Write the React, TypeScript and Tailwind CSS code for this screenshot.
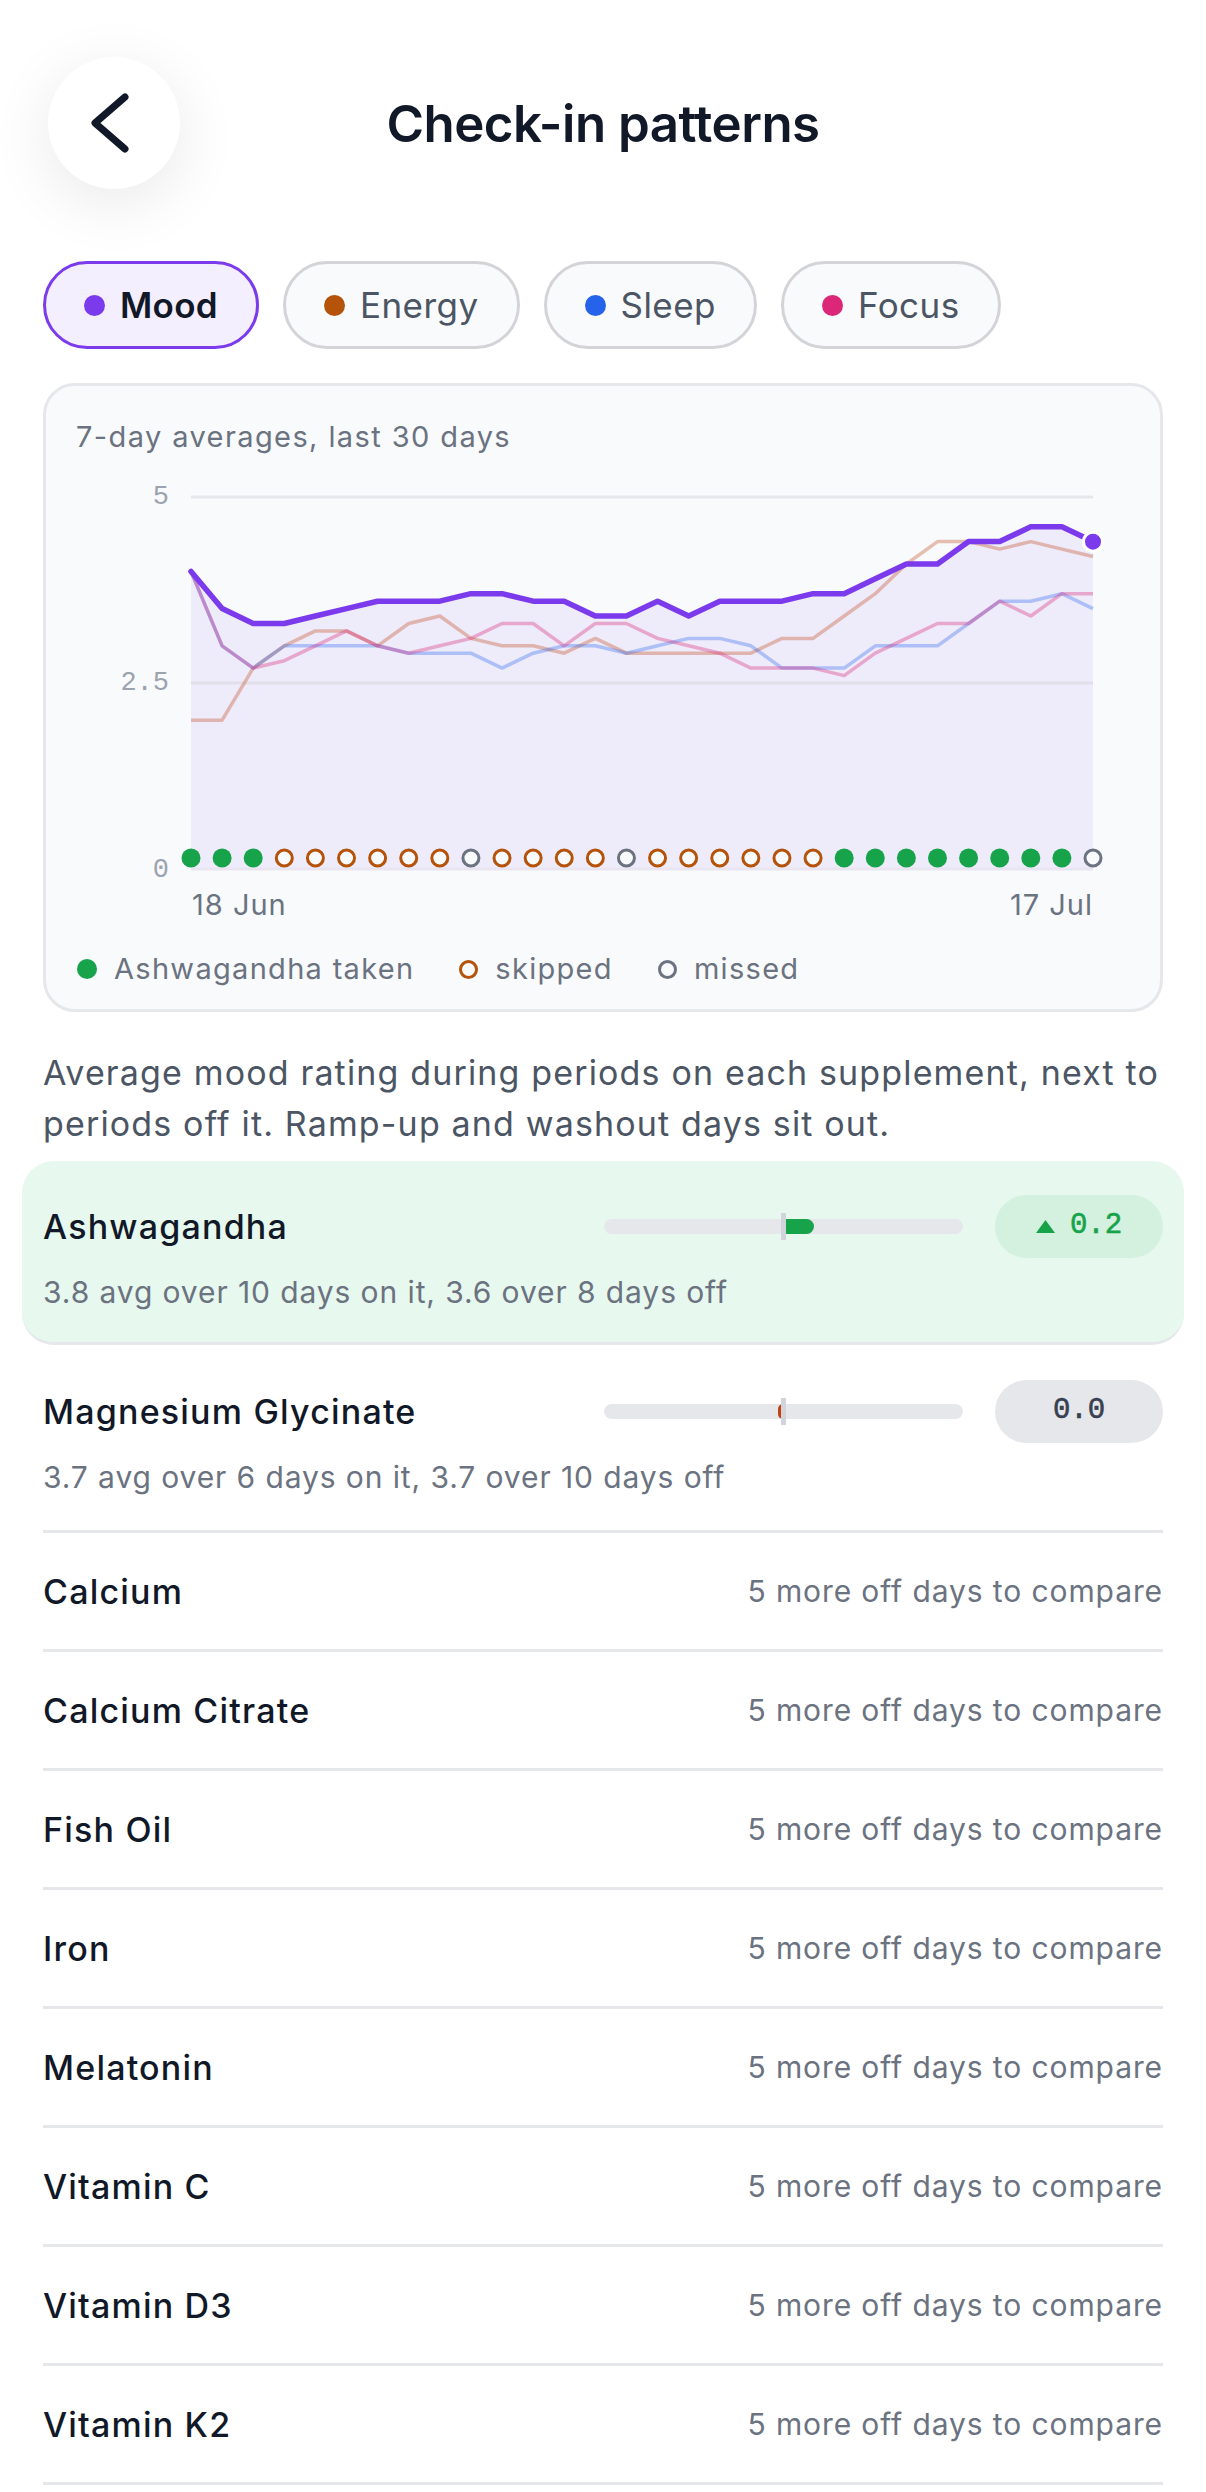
import React from "react";

const mood = [4.0, 3.5, 3.3, 3.3, 3.4, 3.5, 3.6, 3.6, 3.6, 3.7, 3.7, 3.6, 3.6, 3.4, 3.4, 3.6, 3.4, 3.6, 3.6, 3.6, 3.7, 3.7, 3.9, 4.1, 4.1, 4.4, 4.4, 4.6, 4.6, 4.4];
const energy = [2.0, 2.0, 2.7, 3.0, 3.2, 3.2, 3.0, 3.3, 3.4, 3.1, 3.0, 3.0, 2.9, 3.1, 2.9, 2.9, 2.9, 2.9, 2.9, 3.1, 3.1, 3.4, 3.7, 4.1, 4.4, 4.4, 4.3, 4.4, 4.3, 4.2];
const sleep = [4.0, 3.0, 2.7, 3.0, 3.0, 3.0, 3.0, 2.9, 2.9, 2.9, 2.7, 2.9, 3.0, 3.0, 2.9, 3.0, 3.1, 3.1, 3.0, 2.7, 2.7, 2.7, 3.0, 3.0, 3.0, 3.3, 3.6, 3.6, 3.7, 3.5];
const focus = [4.0, 3.0, 2.7, 2.8, 3.0, 3.2, 3.0, 2.9, 3.0, 3.1, 3.3, 3.3, 3.0, 3.3, 3.3, 3.1, 3.0, 2.9, 2.7, 2.7, 2.7, 2.6, 2.9, 3.1, 3.3, 3.3, 3.6, 3.4, 3.7, 3.7];
// i0-2 taken, i3-8 skipped, i9 missed, i10-13 skipped, i14 missed, i15-20 skipped, i21-28 taken, i29 missed
const statusFixed = [
  "g", "g", "g", "o", "o", "o", "o", "o", "o", "m",
  "o", "o", "o", "o", "m", "o", "o", "o", "o", "o",
  "o", "g", "g", "g", "g", "g", "g", "g", "g", "m",
];

const X0 = 145;
const X1 = 1047;
const DX = (X1 - X0) / 29;
const Y0 = 414;
const YS = 74.4;
const px = (i: number) => X0 + DX * i;
const py = (v: number) => Y0 - YS * v;
const pts = (arr: number[]) => arr.map((v, i) => `${px(i).toFixed(1)},${py(v).toFixed(1)}`).join(" ");

function Chart() {
  const area = `M${px(0)},${Y0} ` + mood.map((v, i) => `L${px(i).toFixed(1)},${py(v).toFixed(1)}`).join(" ") + ` L${px(29)},${Y0} Z`;
  return (
    <svg width="1114" height="475" viewBox="0 0 1114 475" className="block">
      <path d={area} fill="#7c3aed" fillOpacity="0.08" />
      <line x1={X0} x2={X1} y1={py(5)} y2={py(5)} stroke="#e5e7eb" strokeWidth="3" />
      <line x1={X0} x2={X1} y1={py(2.5)} y2={py(2.5)} stroke="#e2dfea" strokeWidth="3" />
      <line x1={X0} x2={X1} y1={py(0)} y2={py(0)} stroke="#e9e6f1" strokeWidth="3" />
      <text x="123" y={py(5)} textAnchor="end" dominantBaseline="middle" fontFamily="'Liberation Mono', monospace" fontSize="27" fill="#9ca3af">5</text>
      <text x="123" y={py(2.5)} textAnchor="end" dominantBaseline="middle" fontFamily="'Liberation Mono', monospace" fontSize="27" fill="#9ca3af">2.5</text>
      <text x="123" y={py(0) + 1} textAnchor="end" dominantBaseline="middle" fontFamily="'Liberation Mono', monospace" fontSize="27" fill="#9ca3af">0</text>
      <polyline points={pts(energy)} fill="none" stroke="#c2410c" strokeOpacity="0.32" strokeWidth="3.5" strokeLinejoin="round" />
      <polyline points={pts(sleep)} fill="none" stroke="#2563eb" strokeOpacity="0.32" strokeWidth="3.5" strokeLinejoin="round" />
      <polyline points={pts(focus)} fill="none" stroke="#db2777" strokeOpacity="0.35" strokeWidth="3.5" strokeLinejoin="round" />
      <polyline points={pts(mood)} fill="none" stroke="#7c3aed" strokeWidth="5.5" strokeLinejoin="round" strokeLinecap="round" />
      {statusFixed.map((s, i) =>
        s === "g" ? (
          <circle key={i} cx={px(i)} cy={403} r="9.5" fill="#16a34a" />
        ) : (
          <circle key={i} cx={px(i)} cy={403} r="8" fill="#f8fafc" stroke={s === "o" ? "#b45309" : "#6b7280"} strokeWidth="3" />
        )
      )}
      <circle cx={px(29)} cy={py(4.4)} r="9.5" fill="#7c3aed" stroke="#ffffff" strokeWidth="3" />
      <text x={X0 + 1} y="452" dominantBaseline="middle" fontFamily="Inter, sans-serif" fontSize="29" letterSpacing="1" fill="#6b7280">18 Jun</text>
      <text x={X1} y="452" textAnchor="end" dominantBaseline="middle" fontFamily="Inter, sans-serif" fontSize="29" letterSpacing="1" fill="#6b7280">17 Jul</text>
    </svg>
  );
}

function Chip({ label, dot, active }: { label: string; dot: string; active?: boolean }) {
  return (
    <div
      className={
        active
          ? "flex h-[88px] items-center gap-[15px] rounded-full border-[3px] border-[#7c3aed] bg-[#f3effe] px-[38px]"
          : "flex h-[88px] items-center gap-[15px] rounded-full border-[3px] border-[#d4d4d8] bg-[#f8fafc] px-[38px]"
      }
    >
      <span className="h-[21px] w-[21px] rounded-full" style={{ backgroundColor: dot }} />
      <span className={active ? "text-[35px] font-semibold tracking-[0.3px] text-[#111827]" : "text-[35px] tracking-[0.45px] text-[#4b5563]"}>{label}</span>
    </div>
  );
}

function Bar({ delta, color }: { delta: number; color: string }) {
  const w = Math.abs(delta) * 140;
  return (
    <div className="relative h-[15px] w-[359px] rounded-full bg-[#e5e7eb]">
      {delta > 0 ? (
        <div className="absolute top-0 h-[15px] rounded-r-full" style={{ left: 182, width: w, backgroundColor: color }} />
      ) : (
        <div className="absolute top-0 h-[15px] rounded-l-full" style={{ left: 174, width: 5, backgroundColor: color }} />
      )}
      <div className="absolute left-[177px] top-[-6px] h-[27px] w-[5px] bg-[#d1d5db]" />
    </div>
  );
}

function Triangle() {
  return (
    <svg width="19" height="13" viewBox="0 0 19 13">
      <polygon points="9.5,0 19,13 0,13" fill="#16a34a" />
    </svg>
  );
}

const simple = ["Calcium", "Calcium Citrate", "Fish Oil", "Iron", "Melatonin", "Vitamin C", "Vitamin D3", "Vitamin K2"];

export default function App() {
  return (
    <div className="min-h-[2492px] w-full bg-white font-['Inter',sans-serif] text-[#111827]">
      <div className="grid grid-cols-[132px_1fr_132px] items-center px-[48px] pt-[57px]">
        <button className="flex h-[132px] w-[132px] items-center justify-center rounded-full bg-white shadow-[0_14px_64px_rgba(0,0,0,0.09)]">
          <svg width="132" height="132" viewBox="0 0 132 132">
            <path d="M77 40 L47 66 L77 92" fill="none" stroke="#111827" strokeWidth="7" strokeLinecap="round" strokeLinejoin="round" />
          </svg>
        </button>
        <h1 className="text-center text-[51px] font-semibold leading-none tracking-[-0.5px] text-[#111827]">Check-in patterns</h1>
        <div />
      </div>

      <div className="px-[43px]">
        <div className="mt-[72px] flex gap-[24px]">
          <Chip label="Mood" dot="#7c3aed" active />
          <Chip label="Energy" dot="#b45309" />
          <Chip label="Sleep" dot="#2563eb" />
          <Chip label="Focus" dot="#db2777" />
        </div>

        <div className="mt-[34px] rounded-[32px] border-[3px] border-[#e5e7eb] bg-[#f8fafc] pb-[22px] pt-[33px]">
          <div className="px-[30px] text-[29px] leading-[36px] tracking-[1.4px] text-[#6b7280]">7-day averages, last 30 days</div>
          <Chart />
          <div className="mt-[21px] flex items-center gap-[45px] px-[31px] text-[29px] leading-[36px] tracking-[1.3px] text-[#6b7280]">
            <div className="flex items-center gap-[17px]">
              <span className="h-[20px] w-[20px] rounded-full bg-[#16a34a]" />
              <span>Ashwagandha taken</span>
            </div>
            <div className="flex items-center gap-[17px]">
              <span className="h-[19px] w-[19px] rounded-full border-[3px] border-[#b45309]" />
              <span>skipped</span>
            </div>
            <div className="flex items-center gap-[17px]">
              <span className="h-[19px] w-[19px] rounded-full border-[3px] border-[#6b7280]" />
              <span>missed</span>
            </div>
          </div>
        </div>

        <p className="mt-[35px] text-[34px] leading-[51px] tracking-[1.15px] text-[#4b5563]">
          Average mood rating during periods on each supplement, next to periods off it. Ramp-up and washout days sit out.
        </p>

        <div className="mt-[12px]">
          <div className="-mx-[21px] rounded-[32px] border-b-[3px] border-[#e5e7eb] bg-[#e7f8ee] px-[21px] pb-[30px] pt-[41px]">
            <div className="flex h-[48px] items-center justify-between">
              <span className="text-[34px] font-medium tracking-[1.2px] text-[#111827]">Ashwagandha</span>
              <div className="flex items-center gap-[32px]">
                <Bar delta={0.2} color="#16a34a" />
                <div className="flex h-[63px] w-[168px] items-center justify-center gap-[15px] rounded-full bg-[#d3f1de]">
                  <Triangle />
                  <span className="font-['Liberation_Mono',monospace] text-[29px] text-[#16a34a] [-webkit-text-stroke:0.6px_#16a34a]">0.2</span>
                </div>
              </div>
            </div>
            <div className="mt-[22px] text-[30px] leading-[40px] tracking-[0.9px] text-[#6b7280]">3.8 avg over 10 days on it, 3.6 over 8 days off</div>
          </div>

          <div className="border-b-[3px] border-[#e5e7eb] pb-[33px] pt-[42px]">
            <div className="flex h-[48px] items-center justify-between">
              <span className="text-[34px] font-medium tracking-[1.2px] text-[#111827]">Magnesium Glycinate</span>
              <div className="flex items-center gap-[32px]">
                <Bar delta={-0.02} color="#c2410c" />
                <div className="flex h-[63px] w-[168px] items-center justify-center rounded-full bg-[#e5e7eb]">
                  <span className="font-['Liberation_Mono',monospace] text-[29px] text-[#374151] [-webkit-text-stroke:0.6px_#374151]">0.0</span>
                </div>
              </div>
            </div>
            <div className="mt-[22px] text-[30px] leading-[40px] tracking-[0.9px] text-[#6b7280]">3.7 avg over 6 days on it, 3.7 over 10 days off</div>
          </div>

          {simple.map((n) => (
            <div key={n} className="flex h-[119px] items-center justify-between border-b-[3px] border-[#e5e7eb]">
              <span className="text-[34px] font-medium tracking-[1.2px] text-[#111827]">{n}</span>
              <span className="text-[30px] tracking-[0.9px] text-[#6b7280]">5 more off days to compare</span>
            </div>
          ))}
        </div>
      </div>
    </div>
  );
}
